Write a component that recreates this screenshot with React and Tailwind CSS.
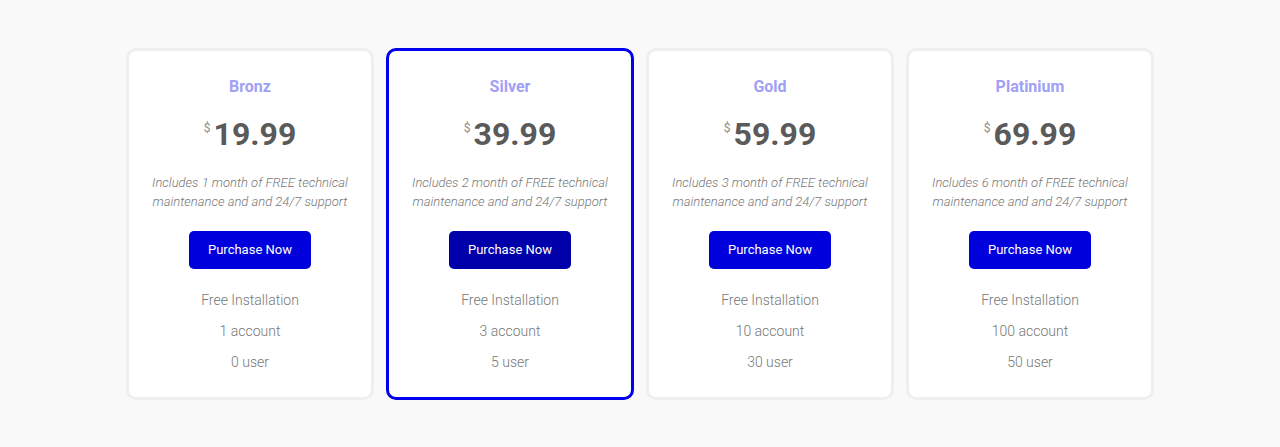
const PLANS = [
  { name: "Bronz", price: "19.99", months: 1, accounts: 1, users: 0 },
  { name: "Silver", price: "39.99", months: 2, accounts: 3, users: 5, active: true },
  { name: "Gold", price: "59.99", months: 3, accounts: 10, users: 30 },
  { name: "Platinium", price: "69.99", months: 6, accounts: 100, users: 50 },
];

const PlanCard = ({ plan }) => (
  <div
    className={`w-[248px] h-[352px] rounded-[10px] border-[3px] bg-white px-4 pt-[24px] text-center ${
      plan.active ? "border-[#0000ee]" : "border-[#efefef]"
    }`}
  >
    <h3 className="text-base leading-6 font-bold text-[#a0a0f6]">{plan.name}</h3>
    <div className="mt-[15px] flex h-10 items-center justify-center text-[#5a5a5a]">
      <span className="mr-[3px] -mt-[12px] text-xs text-[#8a8a8a]">$</span>
      <span className="text-[32px] leading-10 font-bold">{plan.price}</span>
    </div>
    <p className="mt-[19px] text-[13px] leading-[19px] font-light italic text-[#777]">
      Includes {plan.months} month of FREE technical
      <br />
      maintenance and and 24/7 support
    </p>
    <button
      className={`mt-[20px] h-[38px] w-[122px] rounded-[5px] text-[13px] text-white ${
        plan.active ? "bg-[#0000aa]" : "bg-[#0000dd]"
      }`}
    >
      Purchase Now
    </button>
    <ul className="mt-4 text-sm leading-[31px] font-light text-[#777]">
      <li>Free Installation</li>
      <li>{plan.accounts} account</li>
      <li>{plan.users} user</li>
    </ul>
  </div>
);

export default function App() {
  return (
    <div className="min-h-[447px] bg-[#f9f9f9] pt-[48px] font-['Roboto',sans-serif]">
      <div className="flex justify-center gap-3">
        {PLANS.map((plan) => (
          <PlanCard key={plan.name} plan={plan} />
        ))}
      </div>
    </div>
  );
}
